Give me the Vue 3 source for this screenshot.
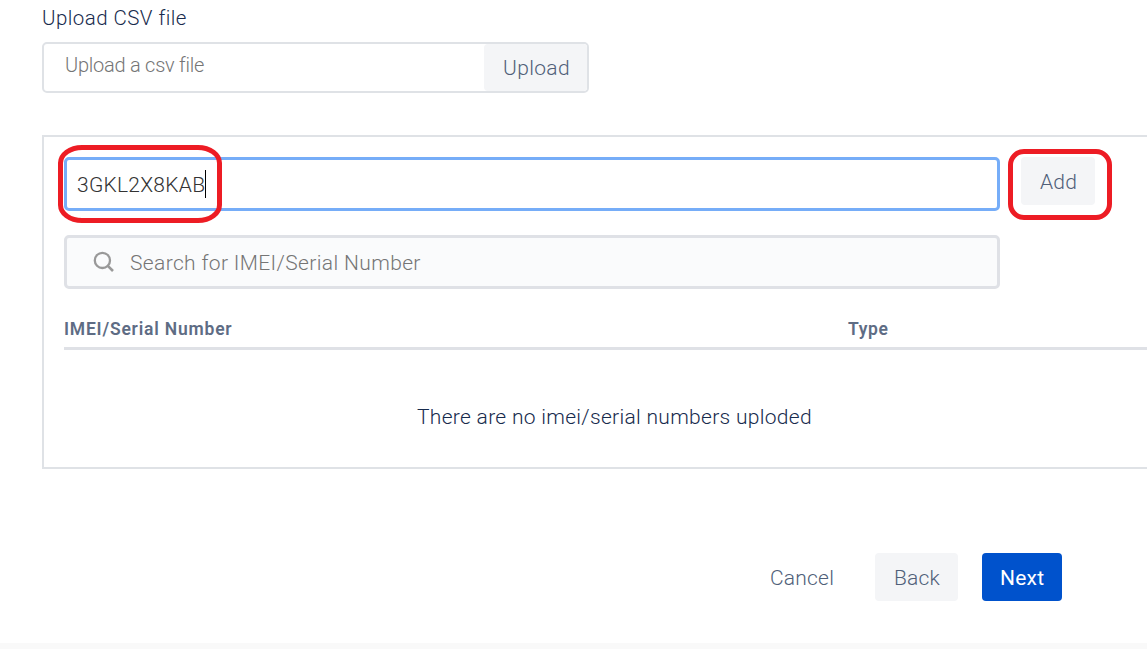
<script setup>
import { ref } from 'vue'

const serial = ref('3GKL2X8KAB')
const columns = ['IMEI/Serial Number', 'Type']
</script>

<template>
  <main class="page">
    <div class="label"><span class="t-label">Upload CSV file</span></div>
    <div class="file-field">
      <div class="file-name"><span class="t-file">Upload a csv file</span></div>
      <button class="btn file-btn"><span class="t-upload">Upload</span></button>
    </div>

    <section class="panel">
      <div class="entry-row">
        <div class="entry">
          <span class="t-serial">{{ serial }}</span><i class="caret"></i>
          <div class="mark mark-entry"></div>
        </div>
        <div class="add-wrap">
          <button class="btn add"><span class="t-add">Add</span></button>
          <div class="mark mark-add"></div>
        </div>
      </div>

      <div class="search">
        <svg class="glass" width="22" height="22" viewBox="0 0 22 22" fill="none" stroke="#999" stroke-width="2.3">
          <circle cx="9.4" cy="9.4" r="7.6" />
          <path d="M14.8 14.8L20 20" stroke-width="2.6" />
        </svg>
        <span class="t-search">Search for IMEI/Serial Number</span>
      </div>

      <div class="thead">
        <span v-for="(c, i) in columns" :key="c" :class="'col-' + i">{{ c }}</span>
      </div>
      <div class="empty"><span class="t-empty">There are no imei/serial numbers uploded</span></div>
    </section>

    <div class="actions">
      <button class="btn cancel"><span class="t-cancel">Cancel</span></button>
      <button class="btn back"><span class="t-back">Back</span></button>
      <button class="btn next"><span class="t-next">Next</span></button>
    </div>
    <footer class="foot"></footer>
  </main>
</template>

<style>
body {
  margin: 0;
  overflow: hidden;
  background: #fff;
}
</style>

<style scoped>
.page {
  box-sizing: border-box;
  width: 1147px;
  height: 649px;
  overflow: hidden;
  display: flex;
  flex-direction: column;
  font-family: Roboto, "Liberation Sans", sans-serif;
  font-weight: 300;
  font-size: 21px;
  line-height: 26px;
  color: #172b4d;
  white-space: nowrap;
}
.page * {
  box-sizing: border-box;
}
.label {
  height: 42px;
  padding: 5px 0 0 42px;
  font-size: 20.5px;
  letter-spacing: 0.45px;
}
.file-field {
  flex: none;
  display: flex;
  width: 547px;
  height: 51px;
  margin-left: 42px;
  border: 2px solid #dfe2e6;
  border-radius: 5px;
}
.file-name {
  width: 440px;
  padding: 8px 0 0 21px;
  font-size: 20px;
  letter-spacing: -0.24px;
  color: #757575;
}
.btn {
  flex: none;
  display: flex;
  align-items: center;
  border: 0;
  margin: 0;
  padding: 2px 0 0 19px;
  height: 48px;
  border-radius: 4px;
  background: #f4f5f7;
  color: #505f79;
  font: inherit;
  letter-spacing: 0.2px;
}
.file-btn {
  width: 103px;
  height: 47px;
  padding-top: 0;
  letter-spacing: 0.35px;
}
.panel {
  flex: none;
  width: 1120px;
  height: 334px;
  margin: 42px 0 0 42px;
  padding: 20px 0 0 20px;
  border: 2px solid #dfe2e6;
}
.entry-row {
  display: flex;
  gap: 21px;
  height: 78px;
}
.entry {
  position: relative;
  display: flex;
  align-items: center;
  width: 936px;
  height: 54px;
  padding-left: 10px;
  border: 3px solid #76adf8;
  border-radius: 5px;
  color: #333;
}
.t-serial {
  width: 128px;
  padding-top: 2px;
  letter-spacing: 0.25px;
}
.caret {
  width: 1px;
  height: 28px;
  background: #000;
}
.add-wrap {
  position: relative;
  width: 74px;
}
.add {
  width: 74px;
}
.mark {
  position: absolute;
  border: 5px solid #ed1c24;
}
.mark-entry {
  left: -9px;
  top: -15px;
  width: 164px;
  height: 78px;
  border-radius: 24px / 18px;
}
.mark-add {
  left: -13px;
  top: -8px;
  width: 104px;
  height: 71px;
  border-radius: 16px;
}
.search {
  display: flex;
  align-items: center;
  width: 936px;
  height: 54px;
  padding-left: 26px;
  border: 3px solid #dfe1e6;
  border-radius: 5px;
  background: #fafbfc;
  color: #757575;
}
.glass {
  margin-right: 15px;
}
.t-search {
  padding-top: 2px;
  letter-spacing: 0.36px;
}
.thead {
  display: flex;
  height: 61px;
  padding-top: 27px;
  border-bottom: 3px solid #dfe1e6;
  font-size: 17.5px;
  font-weight: 600;
  color: #5e6c84;
}
.col-0 {
  width: 784px;
  letter-spacing: 0.8px;
}
.col-1 {
  letter-spacing: 0.6px;
}
.empty {
  padding: 54px 0 0 353px;
  letter-spacing: 0.3px;
}
.actions {
  flex: none;
  display: flex;
  height: 48px;
  margin-top: 84px;
  padding-left: 769px;
}
.cancel {
  width: 106px;
  padding-left: 1px;
  background: transparent;
}
.back {
  width: 83px;
}
.next {
  width: 80px;
  margin-left: 24px;
  padding-left: 18px;
  background: #0052cc;
  color: #fff;
  font-weight: 400;
}
.foot {
  flex: none;
  height: 6px;
  margin-top: 42px;
  background: #f9f9f9;
}
</style>
